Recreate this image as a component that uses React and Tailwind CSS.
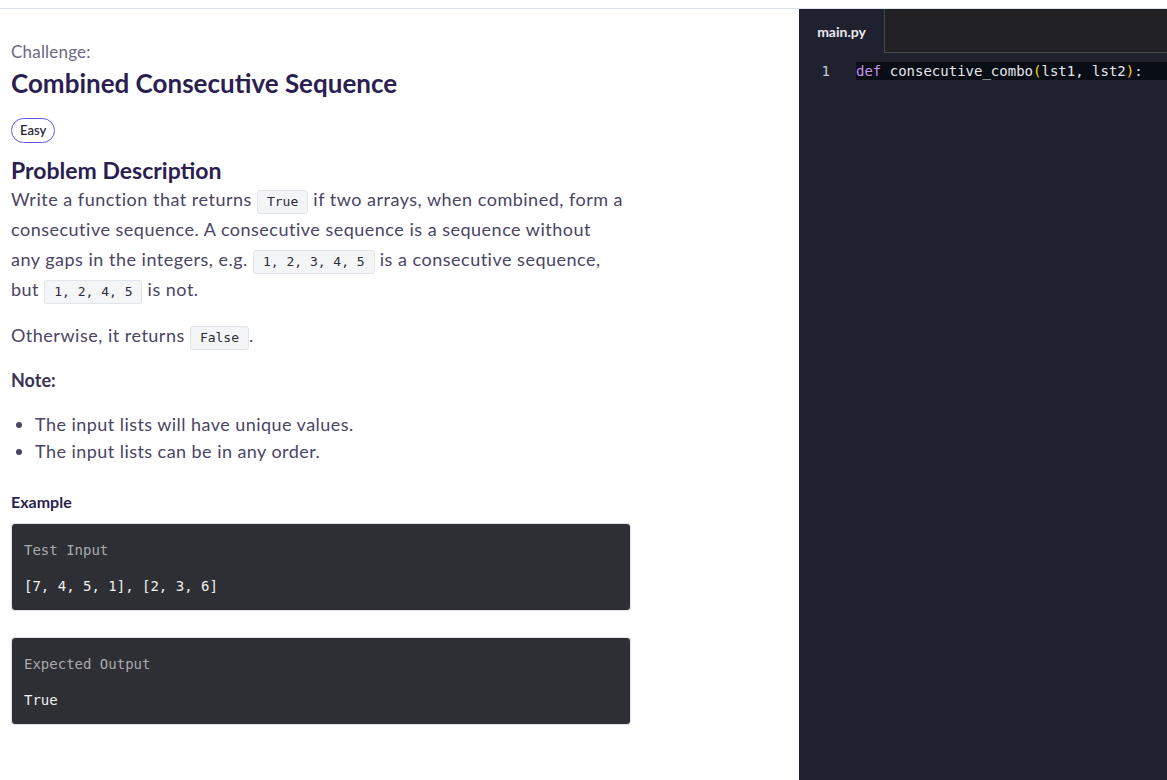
export default function App() {
  const sans = { fontFamily: "Lato, 'Noto Sans', sans-serif" };
  const Code = ({ children }) => (
    <code className="inline-block rounded-[3px] border border-[#e1e4e8] bg-[#f4f5f7] px-[9px] font-['DejaVu_Sans_Mono',monospace] text-[13px] leading-[22px] tracking-normal text-[#2b2b3a]">
      {children}
    </code>
  );

  return (
    <div className="flex h-[780px] w-full flex-col bg-white" style={sans}>
      <div className="h-[9px] shrink-0 border-b border-[#dbe2ea]" />
      <div className="flex min-h-0 flex-1">
        <main className="flex-1 pl-[11px] pt-[33px]">
          <div className="w-[640px]">
            <div className="text-[17px] leading-[20px] tracking-[0.2px] text-[#6d6888]">Challenge:</div>
            <h1 className="mt-[6px] text-[26px] font-bold leading-[30px] text-[#2b1e50]">
              Combined Consecutive Sequence
            </h1>
            <span className="mt-[20px] inline-flex h-[25px] items-center rounded-full border border-[#5b5cf0] px-[8px] text-[13px] font-semibold text-[#2b2540]">
              Easy
            </span>

            <h2 className="mt-[13px] text-[23px] font-bold leading-[28px] text-[#2b1e50]">
              Problem Description
            </h2>
            <p className="text-[18px] leading-[30px] tracking-[0.5px] text-[#4a4466]">
              Write a function that returns <Code>True</Code> if two arrays, when combined, form a
              <br />
              consecutive sequence. A consecutive sequence is a sequence without
              <br />
              any gaps in the integers, e.g. <Code>1, 2, 3, 4, 5</Code> is a consecutive sequence,
              <br />
              but <Code>1, 2, 4, 5</Code> is not.
            </p>
            <p className="mt-[16px] text-[18px] leading-[30px] tracking-[0.5px] text-[#4a4466]">
              Otherwise, it returns <Code>False</Code>.
            </p>

            <h3 className="mt-[15px] text-[18px] font-bold leading-[30px] text-[#3b3256]">Note:</h3>

            <ul className="mt-[16px] list-disc pl-[24px] text-[18px] leading-[27px] tracking-[0.45px] text-[#4a4466]">
              <li>The input lists will have unique values.</li>
              <li>The input lists can be in any order.</li>
            </ul>

            <h3 className="mt-[25px] text-[16px] font-bold leading-[24px] text-[#2b1e50]">Example</h3>

            <div className="mt-[9px] flex w-[620px] flex-col gap-[26px] font-['DejaVu_Sans_Mono',monospace] text-[14px]">
              <div className="h-[88px] rounded-[4px] border border-[#dfe3e8] bg-[#2e2f35] px-[12px] pt-[17px]">
                <div className="leading-[18px] text-[#a9a9ad]">Test Input</div>
                <div className="mt-[18px] leading-[18px] text-[#f0f0f0]">[7, 4, 5, 1], [2, 3, 6]</div>
              </div>
              <div className="h-[88px] rounded-[4px] border border-[#dfe3e8] bg-[#2e2f35] px-[12px] pt-[17px]">
                <div className="leading-[18px] text-[#a9a9ad]">Expected Output</div>
                <div className="mt-[18px] leading-[18px] text-[#f0f0f0]">True</div>
              </div>
            </div>
          </div>
        </main>

        <aside className="flex w-[368px] shrink-0 flex-col bg-[#1f212e]">
          <div className="flex h-[44px] shrink-0">
            <div className="flex w-[85px] items-center justify-center text-[14px] font-bold text-[#e8e8ee]">
              main.py
            </div>
            <div className="flex-1 border-b border-l border-[#4a4a4e] bg-[#212124]" />
          </div>
          <div className="mt-[9px] flex h-[18px] font-['DejaVu_Sans_Mono',monospace] text-[14px] leading-[18px]">
            <div className="w-[57px] shrink-0 pr-[26px] text-right text-[#c8c8d0]">1</div>
            <div className="flex-1 whitespace-pre bg-[#080d16] text-[#e6e6ea]">
              <span className="text-[#c792ea]">def</span> consecutive_combo
              <span className="text-[#ffd700]">(</span>lst1, lst2
              <span className="text-[#ffd700]">)</span>:
            </div>
          </div>
        </aside>
      </div>
    </div>
  );
}
